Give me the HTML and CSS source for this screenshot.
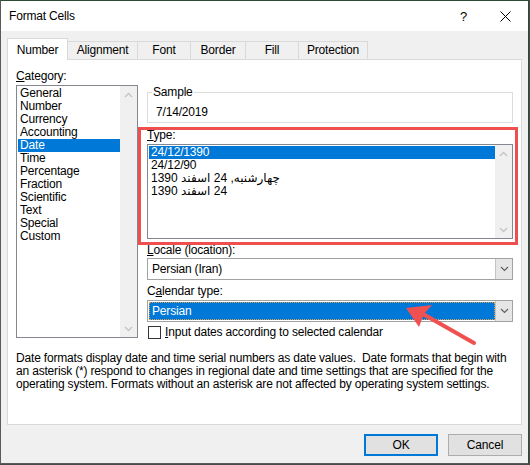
FILE: index.html
```html
<!DOCTYPE html>
<html>
<head>
<meta charset="utf-8">
<title>Format Cells</title>
<link rel="stylesheet" href="styles.css">
</head>
<body>
<div class="dialog">
  <div class="titlebar">
    <span class="title">Format Cells</span>
    <span class="help">?</span>
    <span class="close"><svg width="11" height="11" viewBox="0 0 11 11"><path d="M0.5 0.5 L10.5 10.5 M10.5 0.5 L0.5 10.5" stroke="#000" stroke-width="1" fill="none"/></svg></span>
  </div>

  <div class="tabs">
    <div class="tab tab-number active">Number</div>
    <div class="tab tab-alignment">Alignment</div>
    <div class="tab tab-font">Font</div>
    <div class="tab tab-border">Border</div>
    <div class="tab tab-fill">Fill</div>
    <div class="tab tab-protection">Protection</div>
  </div>

  <div class="panel">
    <div class="panel-grid">
      <div class="col-left">
        <div class="label"><u>C</u>ategory:</div>
        <div class="listbox category">
          <ul class="items">
            <li class="item">General</li>
            <li class="item">Number</li>
            <li class="item">Currency</li>
            <li class="item">Accounting</li>
            <li class="item selected">Date</li>
            <li class="item">Time</li>
            <li class="item">Percentage</li>
            <li class="item">Fraction</li>
            <li class="item">Scientific</li>
            <li class="item">Text</li>
            <li class="item">Special</li>
            <li class="item">Custom</li>
          </ul>
          <div class="vscroll">
            <span class="scroll-btn"><svg width="9" height="6" viewBox="0 0 9 6"><path d="M1 5 L4.5 1.5 L8 5" stroke="#c4c4c4" stroke-width="1.4" fill="none"/></svg></span>
            <span class="scroll-btn"><svg width="9" height="6" viewBox="0 0 9 6"><path d="M1 1 L4.5 4.5 L8 1" stroke="#c4c4c4" stroke-width="1.4" fill="none"/></svg></span>
          </div>
        </div>
      </div>

      <div class="col-right">
        <div class="sample">
          <span class="sample-legend">Sample</span>
          <div class="sample-value">7/14/2019</div>
        </div>

        <div class="type-section">
          <div class="label"><u>T</u>ype:</div>
          <div class="listbox typelist">
            <ul class="items">
              <li class="item selected">24/12/1390</li>
              <li class="item">24/12/90</li>
              <li class="item">چهارشنبه, 24 اسفند 1390</li>
              <li class="item"><span class="rtl-run" dir="rtl">24 اسفند 1390</span></li>
            </ul>
            <div class="vscroll">
              <span class="scroll-btn"><svg width="9" height="6" viewBox="0 0 9 6"><path d="M1 5 L4.5 1.5 L8 5" stroke="#c4c4c4" stroke-width="1.4" fill="none"/></svg></span>
              <span class="scroll-btn"><svg width="9" height="6" viewBox="0 0 9 6"><path d="M1 1 L4.5 4.5 L8 1" stroke="#c4c4c4" stroke-width="1.4" fill="none"/></svg></span>
            </div>
          </div>
        </div>

        <div class="label label-locale"><u>L</u>ocale (location):</div>
        <div class="dropdown">
          <div class="dropdown-value">Persian (Iran)</div>
          <div class="dropdown-btn"><svg width="9" height="6" viewBox="0 0 9 6"><path d="M1 1 L4.5 4.5 L8 1" stroke="#606060" stroke-width="1.2" fill="none"/></svg></div>
        </div>

        <div class="label label-calendar">C<u>a</u>lendar type:</div>
        <div class="dropdown dropdown-calendar">
          <div class="dropdown-value selected">Persian</div>
          <div class="dropdown-btn"><svg width="9" height="6" viewBox="0 0 9 6"><path d="M1 1 L4.5 4.5 L8 1" stroke="#606060" stroke-width="1.2" fill="none"/></svg></div>
        </div>

        <div class="check-row">
          <span class="checkbox"></span>
          <span class="check-label"><u>I</u>nput dates according to selected calendar</span>
        </div>
      </div>
    </div>

    <p class="desc">Date formats display date and time serial numbers as date values.&nbsp; Date formats that begin with<br>an asterisk (*) respond to changes in regional date and time settings that are specified for the<br>operating system. Formats without an asterisk are not affected by operating system settings.</p>
  </div>

  <div class="buttons">
    <button class="btn btn-ok">OK</button>
    <button class="btn">Cancel</button>
  </div>

  <svg class="arrow" width="80" height="50" viewBox="400 300 80 50">
    <line x1="423" y1="314" x2="474" y2="343" stroke="#ef5050" stroke-width="4" stroke-linecap="round"/>
    <polygon points="406,308 432,305 424,314 419,327" fill="#ef5050"/>
  </svg>
</div>
</body>
</html>
```

FILE: styles.css
```css
* {
  box-sizing: border-box;
}

html, body {
  margin: 0;
  padding: 0;
}

body {
  width: 530px;
  height: 465px;
  overflow: hidden;
  background: #4a4a4a;
  font-family: "Liberation Sans", "DejaVu Sans", sans-serif;
  font-size: 12px;
  letter-spacing: -0.18px;
  color: #000;
}

.dialog {
  position: relative;
  width: 529px;
  height: 464px;
  background: #f0f0f0;
  border: 1px solid #5a5a5a;
  border-top-color: #2b4a38;
  border-right-color: #2b4a38;
}

/* Title bar */
.titlebar {
  height: 30px;
  background: #fff;
  display: flex;
  align-items: center;
}

.title {
  padding-left: 8px;
  flex: 1;
}

.help {
  margin-right: 15px;
  font-size: 13px;
}

.close {
  width: 46px;
  height: 30px;
  display: flex;
  align-items: center;
  justify-content: center;
}

/* Tabs */
.tabs {
  display: flex;
  align-items: flex-end;
  height: 21px;
  margin-top: 7px;
  padding-left: 6px;
}

.tab {
  height: 18px;
  line-height: 16px;
  text-align: center;
  border: 1px solid #d9d9d9;
  border-bottom: none;
  background: #f0f0f0;
  margin-left: -1px;
  white-space: nowrap;
}

.tab.active {
  position: relative;
  z-index: 2;
  height: 22px;
  margin-bottom: -1px;
  padding-top: 3px;
  background: #fff;
  margin-left: 0;
}

.tab-number { width: 61px; }
.tab-alignment { width: 71px; }
.tab-font { width: 54px; }
.tab-border { width: 56px; }
.tab-fill { width: 54px; }
.tab-protection { width: 70px; }

/* Panel */
.panel {
  margin-left: 6px;
  width: 515px;
  height: 366px;
  background: #fff;
  border: 1px solid #d9d9d9;
  padding: 8px 7px 0 8px;
}

.panel-grid {
  display: grid;
  grid-template-columns: 122px 366px;
  column-gap: 9px;
  align-items: start;
}

.label {
  line-height: 16px;
  white-space: nowrap;
}

/* List boxes */
.listbox {
  display: flex;
  background: #fff;
  border: 1px solid #828790;
  margin-top: 1px;
}

.category {
  height: 253px;
}

.typelist {
  height: 95px;
}

.items {
  list-style: none;
  margin: 0;
  padding: 1px 0 1px 1px;
  flex: 1;
  min-width: 0;
}

.item {
  height: 13px;
  line-height: 13px;
  padding-left: 2px;
  white-space: nowrap;
}

.item.selected {
  background: #0078d7;
  color: #fff;
}

.rtl-run {
  unicode-bidi: isolate;
}

.vscroll {
  width: 17px;
  background: #f0f0f0;
  display: flex;
  flex-direction: column;
  justify-content: space-between;
}

.scroll-btn {
  height: 17px;
  display: flex;
  align-items: center;
  justify-content: center;
}

/* Sample group */
.sample {
  margin-top: 24px;
  height: 31px;
  border: 1px solid #dcdcdc;
  padding-left: 8px;
}

.sample-legend {
  display: block;
  width: fit-content;
  margin: -9px 0 0 -4px;
  padding: 0 1px;
  line-height: 16px;
  background: #fff;
}

.sample-value {
  margin-top: 4px;
  line-height: 16px;
}

/* Type section with red annotation box */
.type-section {
  position: relative;
  margin-top: 4px;
}

.type-section::after {
  content: "";
  position: absolute;
  left: -9px;
  top: 0;
  right: -5px;
  bottom: -6px;
  border: 3px solid #ef4f4f;
  pointer-events: none;
}

.label-locale {
  margin-top: 3px;
}

.label-calendar {
  margin-top: 3px;
}

/* Dropdowns */
.dropdown {
  display: flex;
  height: 22px;
  border: 1px solid #a2a2a2;
  background: #fff;
}

.dropdown-calendar {
  margin-top: 1px;
}

.dropdown-value {
  flex: 1;
  line-height: 20px;
  padding-left: 4px;
  white-space: nowrap;
}

.dropdown-value.selected {
  margin: 1px 0 1px 1px;
  line-height: 16px;
  padding-left: 2px;
  background: #0078d7;
  color: #fff;
  border: 1px dotted #e0a050;
}

.dropdown-btn {
  width: 17px;
  margin: 0;
  background: #e6e6e6;
  border-left: 1px solid #c4c4c4;
  display: flex;
  align-items: center;
  justify-content: center;
}

/* Checkbox */
.check-row {
  display: flex;
  align-items: center;
  height: 16px;
  margin-top: 2px;
}

.checkbox {
  width: 13px;
  height: 13px;
  margin-left: 1px;
  border: 1px solid #333;
  background: #fff;
}

.check-label {
  margin-left: 4px;
  line-height: 16px;
  white-space: nowrap;
}

/* Description */
.desc {
  margin: 12px 0 0 0;
  line-height: 13px;
  white-space: nowrap;
}

/* Buttons */
.buttons {
  display: flex;
  justify-content: flex-end;
  gap: 10px;
  margin-top: 9px;
  padding-right: 6px;
}

.btn {
  width: 74px;
  height: 22px;
  padding: 0;
  border: 1px solid #adadad;
  background: #e1e1e1;
  font-family: inherit;
  font-size: 12px;
  letter-spacing: -0.18px;
  color: #000;
}

.btn-ok {
  border: 2px solid #0078d7;
}

/* Annotation arrow */
.arrow {
  position: absolute;
  left: 399px;
  top: 299px;
  pointer-events: none;
}
```
